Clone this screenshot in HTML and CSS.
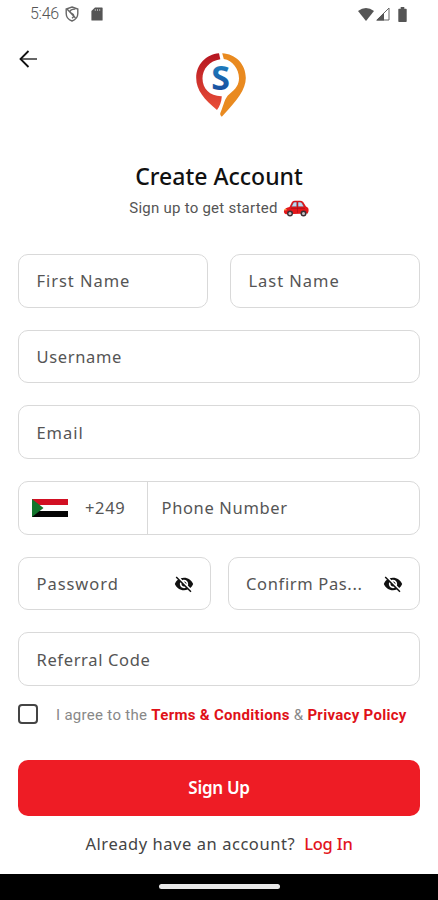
FILE: index.html
```html
<!DOCTYPE html>
<html lang="en">
<head>
<meta charset="utf-8">
<meta name="viewport" content="width=device-width, initial-scale=1">
<title>Create Account</title>
<link rel="stylesheet" href="styles.css">
</head>
<body>
<div class="screen">
  <header class="status">
    <span class="clock">5:46</span>
    <svg class="shield" width="14" height="16" viewBox="0 0 14 16" fill="none" stroke="#666" stroke-width="1.4"><path d="M7 1 12.8 3v4.5C12.800 11 10.500 13.700 7 15 3.500 13.700 1.200 11 1.200 7.500V3z"/><path d="M10.300 3.200C7.500 3 4.200 4.200 5.200 6.300c.6 1.200 3.400 1.300 3.600 3.200.1 1.200-.7 2-1.800 2.800M2 3l8.500 9"/></svg>
    <svg class="sd" width="12" height="14" viewBox="0 0 12 14"><path d="M4 .5h7q.6 0 .6.600v11.800q0 .6-.6.600H1q-.6 0-.6-.6V4z" fill="#555"/><path d="M4.300 2v2M6.500 2v2M8.700 2v2" stroke="#aaa"/></svg>
    <span class="grow"></span>
    <svg width="16" height="13" viewBox="0 0 16 13"><path d="M0 3Q8-3 16 3L8 13z" fill="#555"/></svg>
    <svg class="signal" width="14" height="14" viewBox="0 0 14 14"><path d="M13 1v12H1z" fill="#fff" stroke="#666"/><path d="M0 13.500 8 5.800v7.700z" fill="#555"/></svg>
    <svg class="battery" width="9" height="15" viewBox="0 0 9 15"><path d="M2.700 0h3.600v1.700H8q.7 0 .7.700v11.800q0 .7-.7.700H1q-.7 0-.7-.7V2.400q0-.7.700-.7h1.700z" fill="#555"/></svg>
  </header>

  <div class="brand">
    <svg class="back" width="18" height="18" viewBox="0 0 18 18" fill="none" stroke-width="1.800"><path d="M2 9h16" stroke="#555"/><path d="M9.500 1 1.500 9l8 8" stroke="#111"/></svg>
    <svg class="logo" width="50" height="64" viewBox="0 0 50 64">
      <defs>
        <linearGradient id="red" x2="0" y2="1"><stop stop-color="#b51520"/><stop offset="1" stop-color="#e94f38"/></linearGradient>
        <linearGradient id="blue" x2="0" y2="1"><stop stop-color="#2191ca"/><stop offset="1" stop-color="#153e94"/></linearGradient>
      </defs>
      <path d="M23 .3C10 1.500.2 11.500.2 25c0 12 8 21.500 20.800 32 2.600-3.200 4.500-8 4.800-13.800C14 43.500 6.500 35.500 6.500 25.500c0-9.500 7-17.600 17.800-19.200z" fill="url(#red)"/>
      <path d="M26.200.3C39.500.8 49.800 11.200 49.800 25c0 11.500-8.500 22-24 38.700-1.500-1-2-2.500-1.300-4.200 3.700-8.500 4-14.500 9-18.500C40 36 43 31.500 43 25.300 43 15.800 36.500 7.500 27.800 6z" fill="#e98a20"/>
      <text class="logo-letter" x="24.700" y="37" text-anchor="middle" fill="url(#blue)">S</text>
    </svg>
  </div>

  <h1 class="title">Create Account</h1>
  <p class="subtitle"><span>Sign up to get started</span>
    <svg width="26" height="17" viewBox="0 0 26 17"><path d="M1 10.500C1.500 8.500 4 7.500 6.500 7L9 2Q10 .7 12 .7h5q2 0 3.200 1.400L23 6.500c2 .8 2.800 2 2.600 4.500l-.8 2.500L3 14.200Q.5 13.500 1 10.500z" fill="#e3171b"/><path d="M8.300 6.800 10.300 2.800Q10.800 2 12 2h1.800v4.800zM15 2h2q1.200 0 2 1l2 3.800h-6z" fill="#b9daf2" stroke="#8d1820" stroke-width=".5"/><path d="M8 8.500h14M14.500 7v6" stroke="#a90f17" stroke-width=".6"/><circle cx="7" cy="13.500" r="3" fill="#3c3034"/><circle cx="20.500" cy="13.500" r="3" fill="#3c3034"/><circle cx="7" cy="13.500" r="1.500" fill="#c7c4c8"/><circle cx="20.500" cy="13.500" r="1.500" fill="#c7c4c8"/><path d="M1.200 9.800h2.400" stroke="#ffd35d"/></svg>
  </p>

  <form class="form">
    <div class="row names">
      <label class="field"><span class="wide">First Name</span></label>
      <label class="field"><span class="wide">Last Name</span></label>
    </div>
    <label class="field"><span>Username</span></label>
    <label class="field"><span class="wide">Email</span></label>
    <div class="field phone">
      <div class="country">
        <svg width="36" height="18" viewBox="0 0 36 18"><path d="M0 0h36v6H0z" fill="#d21023"/><path d="M0 6h36v6H0z" fill="#fff"/><path d="M0 12h36v6H0z" fill="#050505"/><path d="M0 0 11.500 9 0 18z" fill="#13752c"/></svg>
        <span>+249</span>
      </div>
      <span class="number">Phone Number</span>
    </div>
    <div class="row passwords">
      <label class="field"><span class="wide">Password</span><svg class="eye" width="20" height="20" viewBox="0 0 24 24"><path d="M12 7c2.760 0 5 2.240 5 5 0 .65-.13 1.260-.36 1.830l2.920 2.920c1.510-1.260 2.700-2.890 3.430-4.750-1.730-4.390-6-7.500-11-7.500-1.400 0-2.740.25-3.980.7l2.160 2.160C10.740 7.130 11.350 7 12 7zM2 4.270l2.740 2.740C3.080 8.300 1.780 10.020 1 12c1.730 4.390 6 7.500 11 7.500 1.550 0 3.030-.3 4.380-.84L19.730 22 21 20.730 3.270 3zM7.530 9.800l1.550 1.550C9.030 11.560 9 11.780 9 12c0 1.660 1.340 3 3 3 .22 0 .44-.03.65-.08l1.550 1.550C13.530 16.800 12.790 17 12 17c-2.760 0-5-2.240-5-5 0-.79.2-1.530.53-2.200zm4.310-.78 3.150 3.150.02-.16c0-1.660-1.340-3-3-3z"/></svg></label>
      <label class="field"><span>Confirm Pas...</span><svg class="eye" width="20" height="20" viewBox="0 0 24 24"><path d="M12 7c2.760 0 5 2.240 5 5 0 .65-.13 1.260-.36 1.830l2.920 2.920c1.510-1.260 2.700-2.890 3.430-4.750-1.730-4.390-6-7.500-11-7.500-1.400 0-2.740.25-3.980.7l2.160 2.160C10.740 7.130 11.350 7 12 7zM2 4.270l2.740 2.740C3.080 8.300 1.780 10.020 1 12c1.730 4.390 6 7.500 11 7.500 1.550 0 3.030-.3 4.380-.84L19.730 22 21 20.730 3.270 3zM7.530 9.800l1.550 1.550C9.030 11.560 9 11.780 9 12c0 1.660 1.340 3 3 3 .22 0 .44-.03.65-.08l1.550 1.550C13.530 16.800 12.790 17 12 17c-2.760 0-5-2.240-5-5 0-.79.2-1.530.53-2.200zm4.310-.78 3.150 3.150.02-.16c0-1.660-1.340-3-3-3z"/></svg></label>
    </div>
    <label class="field"><span>Referral Code</span></label>
  </form>

  <div class="agree"><span class="box"></span><span class="terms">I agree to the <b>Terms &amp; Conditions</b> &amp; <b>Privacy Policy</b></span></div>
  <button class="submit" type="button">Sign Up</button>
  <p class="login"><span>Already have an account?</span><a>Log In</a></p>
  <footer class="nav"><span class="pill"></span></footer>
</div>
</body>
</html>
```
FILE: styles.css
```css
* { box-sizing: border-box; }
body { margin: 0; background: #fff; font-family: "Noto Sans", sans-serif; color: #444; }
.screen { width: 438px; height: 900px; display: flex; flex-direction: column; overflow: hidden; }
.screen > * { flex-shrink: 0; }
h1, p { margin: 0; }
svg { display: block; flex: none; }

.status { height: 28px; padding: 0 31px 0 30px; display: flex; align-items: center; }
.clock { font: 300 16px/28px Roboto, sans-serif; color: #555; letter-spacing: -.3px; width: 35px; white-space: nowrap; }
.sd { margin-left: 12px; }
.grow { flex: 1; }
.signal { margin-left: 2px; }
.battery { margin-left: 8px; }

.brand { height: 131px; display: grid; grid-template-columns: 177px 1fr; padding: 22px 0 0 19px; align-items: start; }
.logo { margin-top: 3px; }
.logo-letter { font: 700 34px "Open Sans", sans-serif; }

.title { height: 34px; line-height: 34px; text-align: center; font-size: 23px; font-weight: 500; color: #111; white-space: nowrap; }
.subtitle { height: 30px; display: flex; align-items: center; justify-content: center; gap: 5px; font: 15px/30px Roboto, sans-serif; letter-spacing: .25px; color: #555; white-space: nowrap; }

.form { margin: 31px 18px 0; display: flex; flex-direction: column; gap: 22.2px; }
.row { display: grid; grid-template-columns: 1fr 1fr; }
.names { gap: 22px; }
.passwords { gap: 17px; }
.field { height: 53.500px; border: 1px solid #d9d9d9; border-radius: 10px; padding: 0 17.500px; display: flex; align-items: center; justify-content: space-between; font-size: 16.500px; color: #555; white-space: nowrap; }
.field span { letter-spacing: .65px; }
.field .wide { letter-spacing: .95px; }
.passwords .field { padding-right: 16px; }
.phone { padding: 0; justify-content: flex-start; }
.country { width: 129px; height: 100%; border-right: 1px solid #d9d9d9; padding-left: 13px; display: flex; align-items: center; gap: 17px; }
.number { margin-left: 13.500px; }
.eye { fill: #111; }

.agree { height: 56px; display: flex; align-items: center; padding-left: 18px; }
.box { width: 20px; height: 20px; border: 2px solid #444; border-radius: 4px; margin-right: 18px; }
.terms { font: 15px Roboto, sans-serif; letter-spacing: .3px; color: #888; white-space: nowrap; padding-top: 2px; }
.terms b { font-weight: 700; color: #df1118; }

.submit { height: 56px; margin: 18px 18px 0; padding: 0; border: 0; border-radius: 10px; background: #ee1c25; color: #fff; font: 600 17px "Noto Sans", sans-serif; letter-spacing: -.3px; }
.login { height: 58px; display: flex; justify-content: center; gap: 9px; font-size: 16.500px; line-height: 55px; white-space: nowrap; }
.login span { letter-spacing: .55px; }
.login a { color: #e3141d; font-weight: 500; letter-spacing: -.2px; }
.nav { flex: 1; background: #000; display: flex; justify-content: center; align-items: center; }
.pill { width: 121px; height: 5px; border-radius: 3px; background: #e8e8e8; }
```
